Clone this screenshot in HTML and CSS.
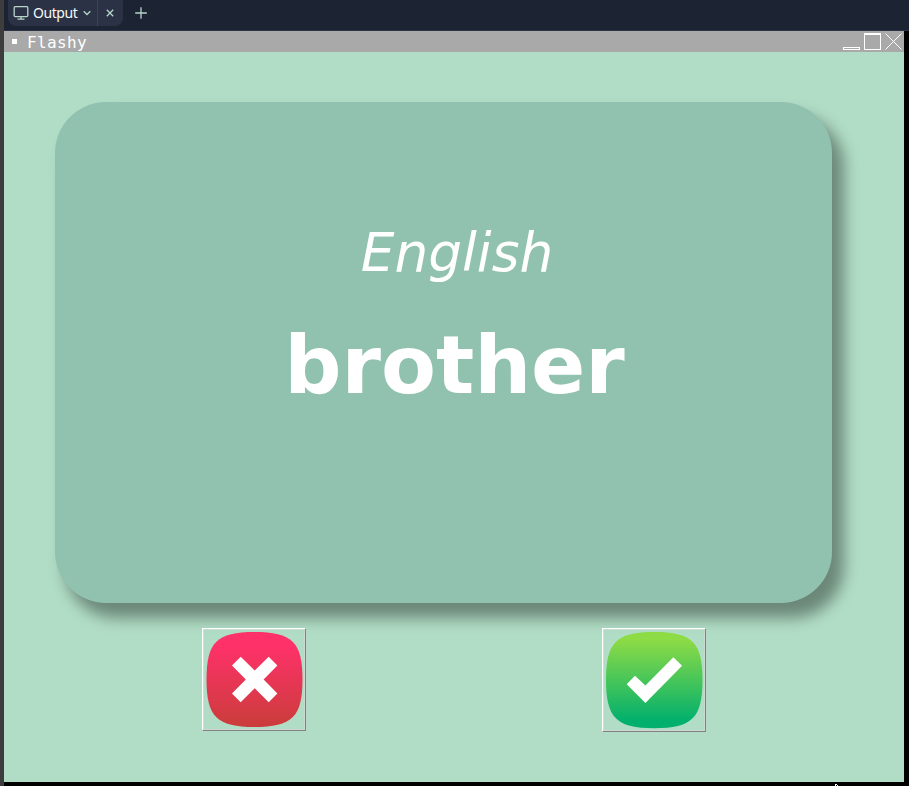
FILE: index.html
```html
<!DOCTYPE html>
<html lang="en">
<head>
<meta charset="utf-8">
<title>Flashy</title>
<link rel="stylesheet" href="styles.css">
</head>
<body>
<div class="screen">
  <header class="tabs">
    <div class="tab">
      <svg class="monitor" width="16" height="16" viewBox="0 0 16 16"><path d="M2.200 1.700h11.600q1 0 1 1v7.900q0 1-1 1H2.200q-1 0-1-1V2.700q0-1 1-1zM8 11.500v2.500M4.500 14.200h7"/></svg>
      <span class="tab-name">Output</span>
      <svg class="chevron" width="10" height="10" viewBox="0 0 10 10"><path d="M1.700 3.200 5 6.500l3.300-3.300"/></svg>
      <span class="tab-close"><svg width="10" height="10" viewBox="0 0 10 10"><path d="m1.800 1.800 6.400 6.400m0-6.400L1.800 8.200"/></svg></span>
    </div>
    <svg class="plus" width="14" height="14" viewBox="0 0 14 14"><path d="M7 1.200v11.600M1.200 7h11.600"/></svg>
  </header>
  <section class="window">
    <div class="titlebar">
      <span class="dot"></span>
      <span class="title">Flashy</span>
      <svg class="controls" width="62" height="21" viewBox="0 0 62 21" shape-rendering="crispEdges">
        <path d="M1.500 16.500h16v2h-16zM22.500 2.500h16v16h-16zM22 3.500h17"/>
        <path d="m43.500 2.500 16 16m0-16-16 16" shape-rendering="auto"/>
      </svg>
    </div>
    <main class="client">
      <div class="card">
        <div class="language">English</div>
        <div class="word">brother</div>
      </div>
      <div class="actions">
        <button class="answer wrong" aria-label="Unknown">
          <svg width="100" height="99" viewBox="0 0 100 99">
            <defs><linearGradient id="red" x1="0" y1="0" x2="0" y2="1"><stop offset=".15" stop-color="#fe3169"/><stop offset=".95" stop-color="#cd3c3d"/></linearGradient></defs>
            <path fill="url(#red)" d="M50.500 2C88 2 98.500 12 98.500 49.500S88 97 50.500 97 2.500 87 2.500 49.500 13 2 50.500 2z"/>
            <path fill="#fff" d="m36.700 26.700 14 13.900 14-13.900 8.700 8.700-13.800 14.100 13.800 14.100-8.700 8.600-14-13.900-14 13.900-8.700-8.600 13.800-14.100L28 35.400z"/>
          </svg>
        </button>
        <button class="answer right" aria-label="Known">
          <svg width="100" height="100" viewBox="0 0 100 100">
            <defs><linearGradient id="green" x1="0" y1="0" x2="0" y2="1"><stop offset=".08" stop-color="#8ddb45"/><stop offset=".92" stop-color="#02b06d"/></linearGradient></defs>
            <path fill="url(#green)" d="M50.200 2C88 2 98.500 12 98.500 50S88 98.200 50.200 98.200 2 88 2 50 12.500 2 50.200 2z"/>
            <path fill="#fff" d="m31 45.700 10.400 9.800 28-28.200 8.700 8.500L41.400 73 22.700 54.300z"/>
          </svg>
        </button>
      </div>
    </main>
  </section>
  <svg class="pointer" width="4" height="2" viewBox="0 0 4 2" shape-rendering="crispEdges"><path d="M0 0h2v1h1v1H2V1H1v1H0z"/></svg>
</div>
</body>
</html>
```

FILE: styles.css
```css
* { box-sizing: border-box; }

body {
  margin: 0;
  background: #000;
}

.screen {
  position: relative;
  width: 909px;
  height: 786px;
  overflow: hidden;
  background: #000;
  border-left: 4px solid #3d3d3d;
}

svg { display: block; flex: none; }

.tabs {
  display: flex;
  align-items: flex-start;
  height: 31px;
  background: #1c2333;
  border-bottom: 1px solid #2b3245;
}

.tab {
  display: flex;
  align-items: center;
  width: 115px;
  height: 26px;
  margin-left: 4px;
  padding-left: 5px;
  border-radius: 0 0 8px 8px;
  background: #2b3245;
}

.monitor, .chevron, .tab-close svg, .plus {
  fill: none;
  stroke: #b7d5c8;
  stroke-width: 1.3;
}

.tab-name {
  width: 45px;
  margin-left: 4px;
  padding-bottom: 1px;
  color: #f5f9fc;
  font: 14px/25px "Noto Sans", sans-serif;
  letter-spacing: -.45px;
}

.chevron { margin-left: 4px; }

.tab-close {
  display: flex;
  align-items: center;
  height: 26px;
  margin-left: 5px;
  padding-left: 7px;
  border-left: 1px solid #3c445c;
}

.plus { margin: 6px 0 0 11px; }

.window { width: 900px; }

.titlebar {
  display: flex;
  align-items: center;
  height: 21px;
  background: #a9a9a9;
}

.dot {
  width: 5px;
  height: 5px;
  margin-left: 8px;
  background: #fff;
}

.title {
  margin-left: 10px;
  padding-top: 2px;
  color: #fff;
  font: 16px/19px "DejaVu Sans Mono", monospace;
  letter-spacing: .37px;
}

.controls {
  margin-left: auto;
  fill: none;
  stroke: #fff;
  stroke-width: 1;
}

.client {
  height: 730px;
  padding: 50px 51px 0;
  background: #b1ddc6;
}

.card {
  width: 777px;
  height: 501px;
  padding: 120px 0 0 25px;
  border-radius: 51px;
  background: #91c2af;
  box-shadow: 11px 14px 15px 1px #6b8778;
  color: #fff;
  font-family: "DejaVu Sans", sans-serif;
  text-align: center;
}

.language {
  padding-left: 2px;
  font-size: 53.300px;
  font-style: italic;
  line-height: 62px;
}

.word {
  margin: 35px 3px 0 0;
  font-size: 80px;
  font-weight: bold;
  line-height: 94px;
}

.actions {
  display: flex;
  gap: 296px;
  align-items: flex-start;
  margin: 25px 0 0 147px;
}

.answer {
  display: block;
  width: 104px;
  height: 104px;
  padding: 1px;
  border: 1px solid;
  border-color: #fff #828282 #828282 #fff;
  background: transparent;
  box-shadow: inset -1px -1px #d0d6d2, inset 1px 1px #ccdfd4;
}

.wrong { height: 103px; }

.pointer {
  position: absolute;
  left: 831px;
  top: 784px;
  fill: #fff;
}
```
